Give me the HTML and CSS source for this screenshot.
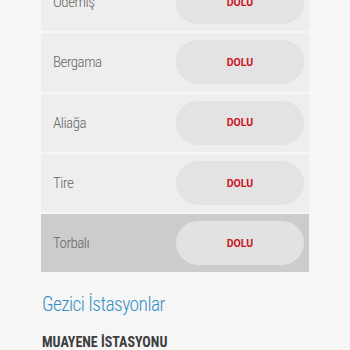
FILE: index.html
```html
<!DOCTYPE html>
<html>
<head>
    <title>Muayene İstasyonları</title>
    <link rel="stylesheet" href="styles.css">
</head>
<body>
    <div class="station-list">
        <div class="station-row">
            <span class="station-name">Ödemiş</span>
            <span class="status-pill">DOLU</span>
        </div>
        <div class="station-row">
            <span class="station-name">Bergama</span>
            <span class="status-pill">DOLU</span>
        </div>
        <div class="station-row">
            <span class="station-name">Aliağa</span>
            <span class="status-pill">DOLU</span>
        </div>
        <div class="station-row">
            <span class="station-name">Tire</span>
            <span class="status-pill">DOLU</span>
        </div>
        <div class="station-row active">
            <span class="station-name">Torbalı</span>
            <span class="status-pill">DOLU</span>
        </div>
    </div>

    <h2 class="section-title">Gezici İstasyonlar</h2>
    <h3 class="section-sub">MUAYENE İSTASYONU</h3>
</body>
</html>
```

FILE: styles.css
```css
body {
    margin: 0;
    background-color: #f6f6f6;
    font-family: Roboto, "Liberation Sans", sans-serif;
    overflow: hidden;
}

.station-list {
    margin: -27px 41px 0 41px;
}

.station-row {
    display: flex;
    align-items: center;
    height: 58.3px;
    box-sizing: border-box;
    padding: 0 5px 0 12px;
    margin-bottom: 2px;
    background-color: #eeeeee;
}

.station-row.active {
    background-color: #cccccc;
}

.station-name {
    flex: 1;
    font-size: 15px;
    font-weight: 300;
    font-stretch: 75%;
    letter-spacing: -0.5px;
    color: #666;
}

.status-pill {
    width: 128px;
    height: 44px;
    border-radius: 22px;
    background-color: #e3e3e3;
    display: flex;
    align-items: center;
    justify-content: center;
    font-size: 10.5px;
    font-weight: bold;
    color: #cc1424;
}

.station-row.active .status-pill {
    background-color: #e2e2e2;
}

.section-title {
    margin: 21px 0 0 42px;
    font-size: 19.5px;
    font-weight: 300;
    font-stretch: 75%;
    letter-spacing: -0.6px;
    color: #3a90c4;
}

.section-sub {
    margin: 18px 0 0 42px;
    font-size: 14px;
    font-weight: bold;
    font-stretch: 75%;
    color: #3e3e3e;
}
```
